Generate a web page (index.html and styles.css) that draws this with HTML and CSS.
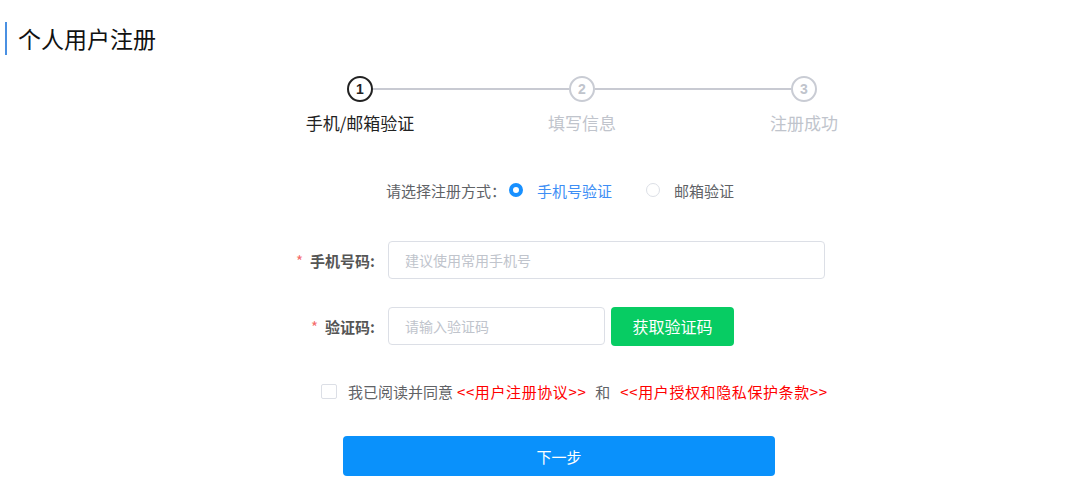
FILE: index.html
```html
<!DOCTYPE html>
<html lang="zh-CN">
<head>
<meta charset="utf-8">
<title>个人用户注册</title>
<link rel="stylesheet" href="styles.css">
</head>
<body>
<div class="page">
  <h1 class="title">个人用户注册</h1>

  <div class="steps">
    <div class="track">
      <span class="dot dot-active">1</span>
      <span class="line"></span>
      <span class="dot">2</span>
      <span class="line"></span>
      <span class="dot">3</span>
    </div>
    <div class="labels">
      <span class="label label-active">手机/邮箱验证</span>
      <span class="label">填写信息</span>
      <span class="label">注册成功</span>
    </div>
  </div>

  <div class="mode">
    <span class="mode-title">请选择注册方式：</span>
    <span class="radio radio-on"></span>
    <span class="mode-opt mode-opt-on">手机号验证</span>
    <span class="radio"></span>
    <span class="mode-opt">邮箱验证</span>
  </div>

  <div class="row row-phone">
    <label class="row-label"><span class="star">*</span>手机号码:</label>
    <div class="input input-wide">建议使用常用手机号</div>
  </div>

  <div class="row row-code">
    <label class="row-label"><span class="star">*</span>验证码:</label>
    <div class="input input-short">请输入验证码</div>
    <button class="btn-code">获取验证码</button>
  </div>

  <div class="agree">
    <span class="checkbox"></span>
    <span class="agree-text">我已阅读并同意</span>
    <span class="link">&lt;&lt;用户注册协议&gt;&gt;</span>
    <span class="agree-and">和</span>
    <span class="link">&lt;&lt;用户授权和隐私保护条款&gt;&gt;</span>
  </div>

  <button class="btn-next">下一步</button>
</div>
</body>
</html>
```

FILE: styles.css
```css
* { box-sizing: border-box; }
html, body {
  margin: 0;
  padding: 0;
  background: #fff;
  font-family: "Noto Sans CJK SC", "Noto Sans", "Liberation Sans", sans-serif;
}
.page {
  width: 1080px;
  height: 486px;
  padding-top: 22px;
}
.title {
  margin: 0 0 0 5px;
  padding-left: 11px;
  border-left: 2px solid #4a90e2;
  height: 33px;
  font-size: 23px;
  line-height: 33px;
  font-weight: 400;
  color: #111;
}

/* steps */
.steps {
  width: 666px;
  margin-left: 249px;
  margin-top: 21px;
}
.track {
  display: flex;
  align-items: center;
  padding: 0 98px;
  height: 26px;
}
.dot {
  width: 26px;
  height: 26px;
  border-radius: 50%;
  border: 2px solid #c9ccd4;
  color: #c0c4cc;
  font-family: "Liberation Sans", Arial, sans-serif;
  font-weight: 700;
  font-size: 14px;
  line-height: 22px;
  text-align: center;
  flex: none;
}
.dot-active {
  border-color: #222;
  color: #222;
}
.line {
  flex: 1;
  height: 2px;
  background: #c8cad2;
}
.labels {
  display: grid;
  grid-template-columns: repeat(3, 222px);
  margin-top: 9px;
}
.label {
  text-align: center;
  font-size: 17px;
  line-height: 24px;
  color: #c0c4cc;
}
.label-active { color: #222; }

/* mode */
.mode {
  display: flex;
  align-items: center;
  margin-left: 386px;
  margin-top: 44px;
  height: 22px;
  font-size: 15px;
  color: #606266;
}
.mode-title { margin-right: 3px; }
.radio {
  width: 14px;
  height: 14px;
  border-radius: 50%;
  border: 1px solid #dcdfe6;
  background: #fff;
  margin-right: 14px;
  flex: none;
}
.radio-on {
  border: 4px solid #1890ff;
  background: #fff;
}
.mode-opt {
  font-size: 15px;
  margin-right: 34px;
}
.mode-opt-on { color: #3d8ef5; }

/* rows */
.row {
  display: flex;
  align-items: center;
  height: 38px;
}
.row-phone { margin-top: 40px; }
.row-code { margin-top: 28px; }
.row-label {
  width: 375px;
  text-align: right;
  font-size: 15px;
  font-weight: 700;
  color: #555;
  margin-right: 13px;
}
.star {
  color: #f56c6c;
  font-weight: 400;
  margin-right: 7px;
}
.input {
  height: 38px;
  border: 1px solid #dcdfe6;
  border-radius: 4px;
  padding-left: 16px;
  font-size: 14px;
  line-height: 36px;
  color: #c0c4cc;
}
.input-wide { width: 437px; }
.input-short { width: 217px; }
.btn-code {
  margin-left: 6px;
  width: 123px;
  height: 39px;
  border: none;
  border-radius: 4px;
  background: #07cc63;
  color: #fff;
  font-family: inherit;
  font-size: 16px;
  cursor: pointer;
}

/* agree */
.agree {
  display: flex;
  align-items: center;
  margin-left: 321px;
  margin-top: 36px;
  height: 20px;
  font-size: 15px;
  color: #606266;
}
.checkbox {
  width: 16px;
  height: 15px;
  border: 1px solid #dcdfe6;
  border-radius: 2px;
  margin-right: 11px;
  flex: none;
}
.agree-text { margin-right: 4px; }
.link {
  color: #f00;
  letter-spacing: 0.6px;
}
.agree-and { margin: 0 10px 0 9px; }

.btn-next {
  display: block;
  margin: 35px 0 0 343px;
  width: 432px;
  height: 40px;
  border: none;
  border-radius: 4px;
  background: #0a91fb;
  color: #fff;
  font-family: inherit;
  font-size: 15px;
  cursor: pointer;
}
```
